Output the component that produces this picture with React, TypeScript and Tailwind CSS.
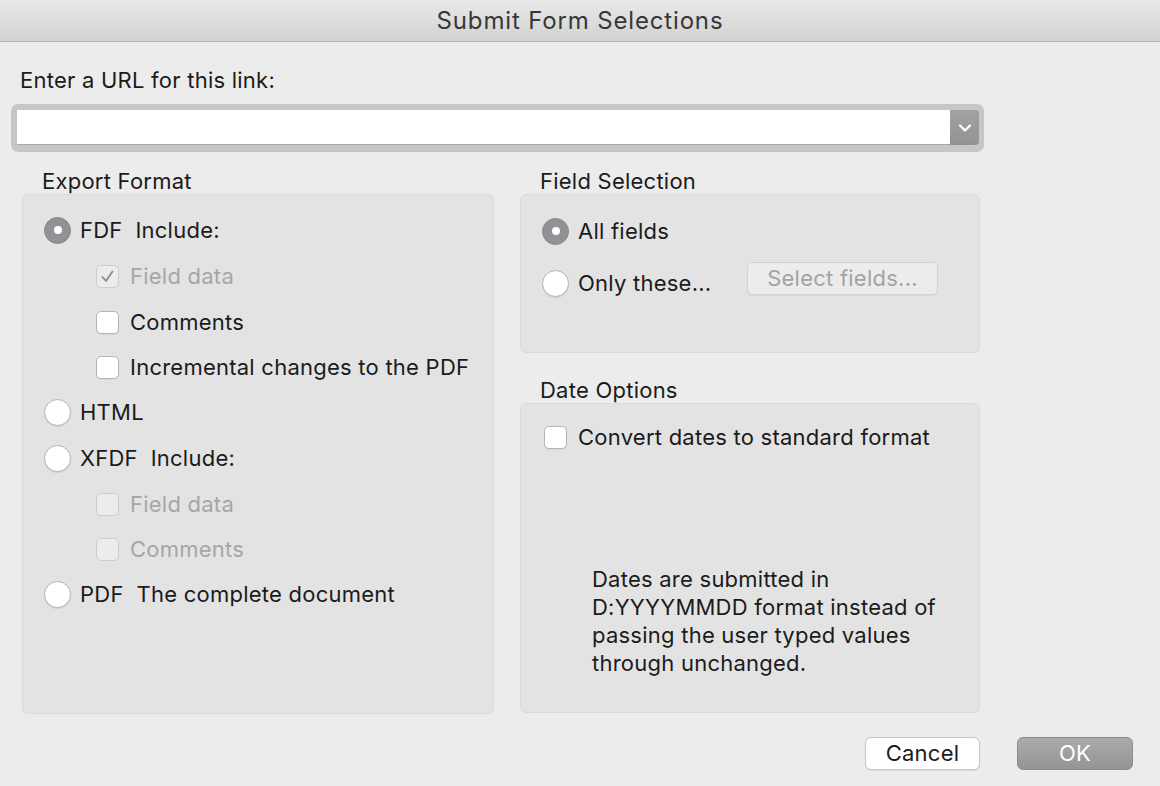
import React from "react";

const font = { fontFamily: "Inter, 'Liberation Sans', Arial, sans-serif" };

function Radio({ checked }: { checked?: boolean }) {
  if (checked) {
    return (
      <div className="w-[27px] h-[27px] rounded-full bg-[#929296] border border-[#86868a] flex items-center justify-center shrink-0">
        <div className="w-[8px] h-[8px] rounded-full bg-white" />
      </div>
    );
  }
  return (
    <div className="w-[27px] h-[27px] rounded-full bg-white border border-[#b4b4b4] shadow-[0_1px_1px_rgba(0,0,0,0.08)] shrink-0" />
  );
}

function Check({ checked, disabled }: { checked?: boolean; disabled?: boolean }) {
  return (
    <div
      className={
        "w-[23px] h-[23px] rounded-[5px] border flex items-center justify-center shrink-0 " +
        (disabled ? "bg-[#ececec] border-[#cdcdcd]" : "bg-white border-[#b5b5b5] shadow-[0_1px_1px_rgba(0,0,0,0.06)]")
      }
    >
      {checked && (
        <svg width="15" height="15" viewBox="0 0 15 15">
          <path d="M2.5 8 L6 12 L12.5 2.5" fill="none" stroke="#8a8a8a" strokeWidth="1.8" strokeLinecap="round" strokeLinejoin="round" />
        </svg>
      )}
    </div>
  );
}

export default function App() {
  return (
    <div className="w-[1160px] h-[786px] bg-[#ececec] overflow-hidden text-[#1b1b1b] tracking-[0.015em]" style={font}>
      {/* Title bar */}
      <div className="h-[42px] border-b border-[#b1b1b1] bg-gradient-to-b from-[#e9e9e9] to-[#d2d2d2] flex items-center justify-center">
        <span className="text-[24px] text-[#373737] tracking-[0.035em]">Submit Form Selections</span>
      </div>

      <div className="pl-[20px] pt-[26px] h-[24px] box-content flex items-center text-[22px]">
        Enter a URL for this link:
      </div>

      {/* Combo */}
      <div className="ml-[11px] mt-[12px] w-[973px] h-[48px] rounded-[7px] bg-[#c6c6c6] pl-[6px] pr-[5px] pt-[6px] pb-[7px] flex">
        <div className="flex-1 bg-white border-b border-[#a9a9a9]" />
        <div className="w-[29px] rounded-r-[4px] bg-gradient-to-b from-[#a2a2a2] to-[#929292] flex items-center justify-center">
          <svg width="14" height="10" viewBox="0 0 14 10">
            <path d="M2 2.5 L7 7.5 L12 2.5" fill="none" stroke="white" strokeWidth="2.2" strokeLinecap="round" strokeLinejoin="round" />
          </svg>
        </div>
      </div>

      {/* Columns */}
      <div className="flex pl-[22px] mt-[16px] gap-[26px] text-[22px]">
        {/* Left */}
        <div className="w-[472px] flex flex-col">
          <div className="h-[26px] pl-[20px] flex items-center">Export Format</div>
          <div className="h-[520px] rounded-[6px] bg-[#e3e3e3] border border-[#dadada] pt-[12px]">
            <div className="h-[46px] flex items-center pl-[21px] gap-[9px]">
              <Radio checked />
              <span>FDF&nbsp;&nbsp;Include:</span>
            </div>
            <div className="h-[46px] flex items-center pl-[73px] gap-[11px] text-[#a6a6a6]">
              <Check checked disabled />
              <span>Field data</span>
            </div>
            <div className="h-[46px] flex items-center pl-[73px] gap-[11px]">
              <Check />
              <span>Comments</span>
            </div>
            <div className="h-[44px] flex items-center pl-[73px] gap-[11px]">
              <Check />
              <span>Incremental changes to the PDF</span>
            </div>
            <div className="h-[46px] flex items-center pl-[21px] gap-[9px]">
              <Radio />
              <span>HTML</span>
            </div>
            <div className="h-[46px] flex items-center pl-[21px] gap-[9px]">
              <Radio />
              <span>XFDF&nbsp;&nbsp;Include:</span>
            </div>
            <div className="h-[46px] flex items-center pl-[73px] gap-[11px] text-[#a6a6a6]">
              <Check disabled />
              <span>Field data</span>
            </div>
            <div className="h-[44px] flex items-center pl-[73px] gap-[11px] text-[#a6a6a6]">
              <Check disabled />
              <span>Comments</span>
            </div>
            <div className="h-[46px] flex items-center pl-[21px] gap-[9px]">
              <Radio />
              <span>PDF&nbsp;&nbsp;The complete document</span>
            </div>
          </div>
        </div>

        {/* Right */}
        <div className="w-[460px] flex flex-col">
          <div className="h-[26px] pl-[20px] flex items-center">Field Selection</div>
          <div className="h-[159px] rounded-[6px] bg-[#e3e3e3] border border-[#dadada] pt-[14px]">
            <div className="h-[44px] flex items-center pl-[21px] gap-[9px]">
              <Radio checked />
              <span>All fields</span>
            </div>
            <div className="h-[60px] flex items-center pl-[21px]">
              <Radio />
              <span className="ml-[9px] w-[169px] whitespace-nowrap">Only these...</span>
              <div className="w-[191px] h-[33px] mb-[9px] rounded-[5px] bg-[#ececec] border border-[#d2d2d2] shadow-[0_1px_1px_rgba(0,0,0,0.05)] flex items-center justify-center text-[#a3a3a3] whitespace-nowrap">
                Select fields...
              </div>
            </div>
          </div>

          <div className="h-[26px] pl-[20px] mt-[24px] flex items-center">Date Options</div>
          <div className="h-[310px] rounded-[6px] bg-[#e3e3e3] border border-[#dadada] pt-[20px] flex flex-col">
            <div className="h-[26px] flex items-center pl-[23px] gap-[11px]">
              <Check />
              <span>Convert dates to standard format</span>
            </div>
            <div className="pl-[71px] mt-[115px] leading-[28px] w-[440px] whitespace-nowrap">
              Dates are submitted in<br />
              D:YYYYMMDD format instead of<br />
              passing the user typed values<br />
              through unchanged.
            </div>
          </div>
        </div>
      </div>

      {/* Buttons */}
      <div className="flex justify-end pr-[27px] mt-[23px] gap-[37px] text-[22px]">
        <div className="w-[115px] h-[33px] rounded-[6px] bg-white border border-[#c6c6c6] shadow-[0_1px_1px_rgba(0,0,0,0.08)] flex items-center justify-center text-[#1b1b1b]">
          Cancel
        </div>
        <div className="w-[116px] h-[33px] rounded-[6px] bg-gradient-to-b from-[#ababab] to-[#949494] border border-[#8c8c8c] flex items-center justify-center text-white">
          OK
        </div>
      </div>
    </div>
  );
}
